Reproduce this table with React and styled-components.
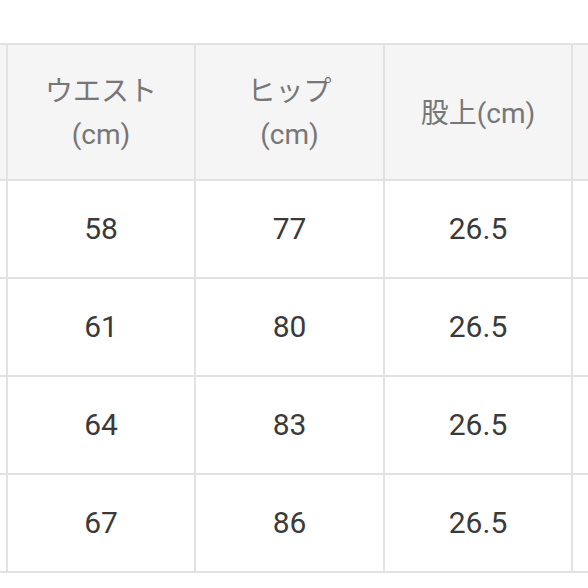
import styled, { createGlobalStyle } from "styled-components";

const GlobalStyle = createGlobalStyle`
  html, body {
    margin: 0;
    padding: 0;
    background: #fff;
    overflow: hidden;
  }
  body {
    font-family: Roboto, "Noto Sans CJK JP", sans-serif;
  }
`;

const Page = styled.div`
  width: 588px;
  height: 588px;
  overflow: hidden;
  padding-top: 43px;
  box-sizing: border-box;
`;

const Table = styled.div`
  margin-left: -93px;
  width: 800px;
  border-top: 2px solid #e2e2e2;
`;

const Row = styled.div`
  display: grid;
  grid-template-columns: 101px 188px 189px 188px 134px;
  height: ${props => (props.head ? "136px" : "98px")};
  background: ${props => (props.head ? "#f5f5f5" : "#fff")};
`;

const Cell = styled.div`
  box-sizing: border-box;
  border-right: 2px solid #e2e2e2;
  border-bottom: 2px solid #e2e2e2;
  display: flex;
  align-items: center;
  justify-content: center;
  text-align: center;
  color: ${props => (props.head ? "#777" : "#3a3a3a")};
  font-size: ${props => (props.head ? "28px" : "30px")};
  line-height: ${props => (props.head ? "43px" : "1")};
  padding-top: ${props => (props.head ? "2px" : "0")};
`;

const headers = [["ウエスト", "(cm)"], ["ヒップ", "(cm)"], ["股上(cm)"]];

const rows = [
  ["58", "77", "26.5"],
  ["61", "80", "26.5"],
  ["64", "83", "26.5"],
  ["67", "86", "26.5"],
];

export default function App() {
  return (
    <Page>
      <GlobalStyle />
      <Table>
        <Row head>
          <Cell head />
          {headers.map((lines, i) => (
            <Cell head key={i}>
              <span>
                {lines.map((l, j) => (
                  <div key={j}>{l}</div>
                ))}
              </span>
            </Cell>
          ))}
          <Cell head />
        </Row>
        {rows.map((r, i) => (
          <Row key={i}>
            <Cell />
            {r.map((v, j) => (
              <Cell key={j}>{v}</Cell>
            ))}
            <Cell />
          </Row>
        ))}
      </Table>
    </Page>
  );
}
